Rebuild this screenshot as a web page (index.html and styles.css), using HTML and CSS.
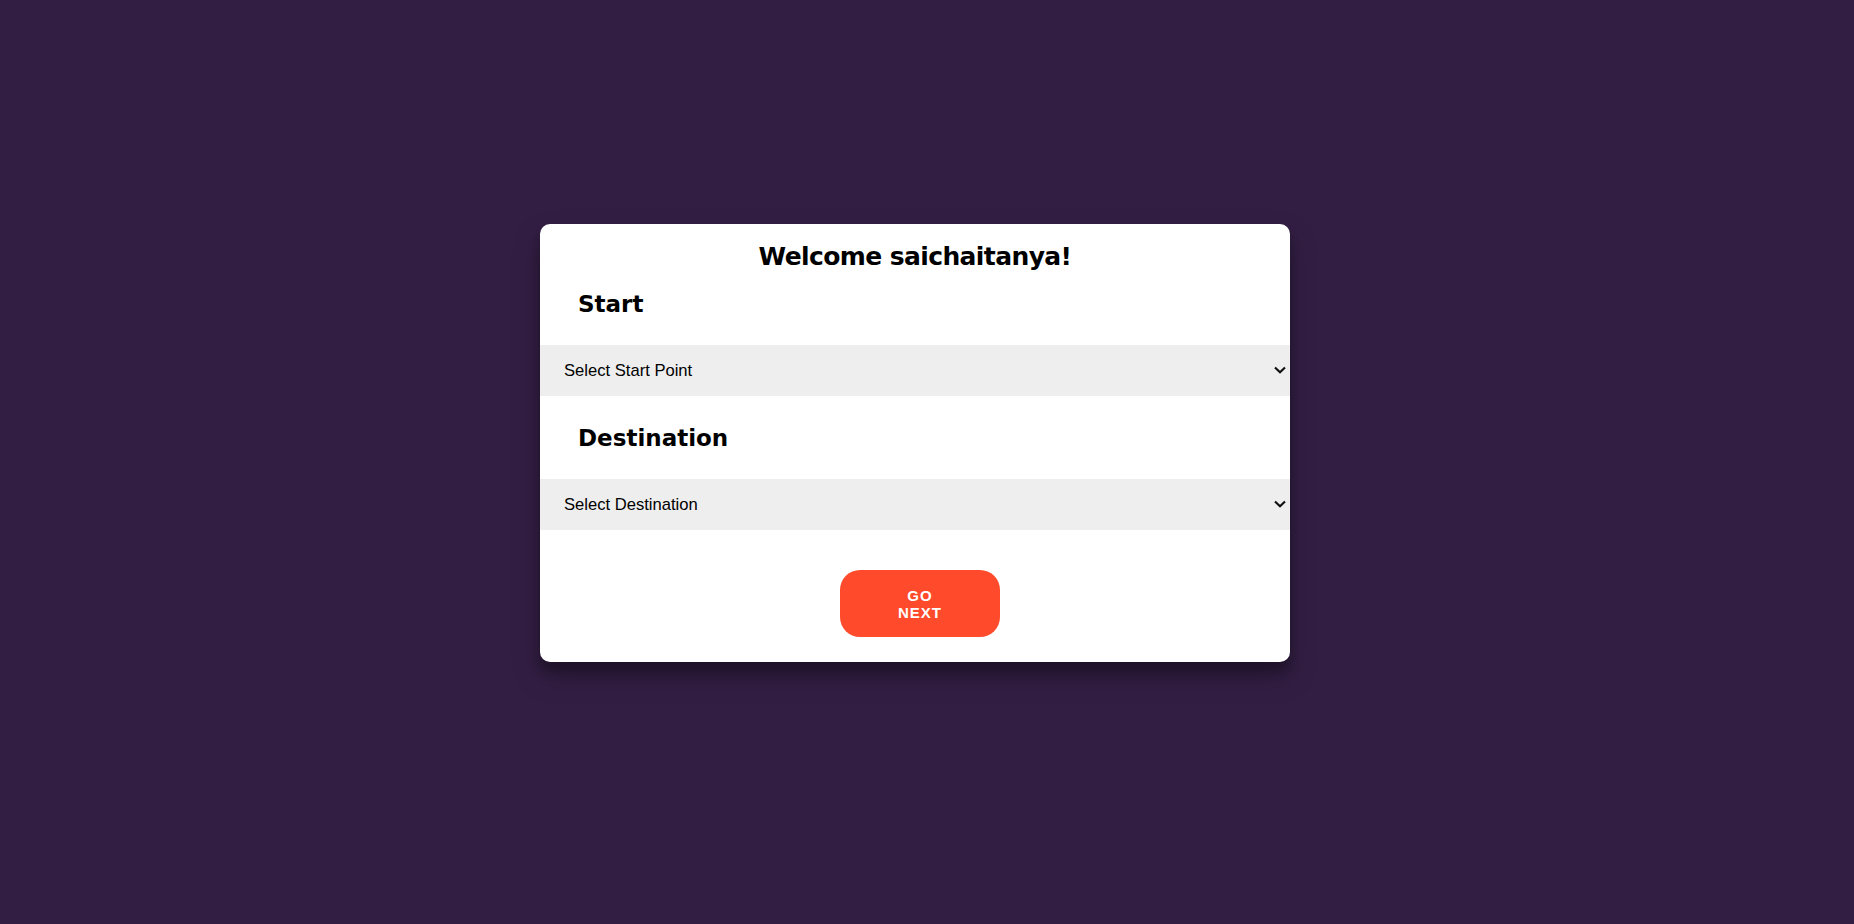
FILE: index.html
```html
<!DOCTYPE html>
<html lang="en">
<head>
<meta charset="utf-8">
<title>Welcome</title>
<link rel="stylesheet" href="styles.css">
</head>
<body>
<main class="page">
  <form class="card">
    <h1 class="title">Welcome saichaitanya!</h1>
    <h2 class="label">Start</h2>
    <div class="select-wrap">
      <select class="select">
        <option>Select Start Point</option>
      </select>
      <svg class="chev" width="12" height="8" viewBox="0 0 12 8"><path d="M1 1.5 L6 6.2 L11 1.5" fill="none" stroke="#111" stroke-width="2.2"/></svg>
    </div>
    <h2 class="label">Destination</h2>
    <div class="select-wrap">
      <select class="select">
        <option>Select Destination</option>
      </select>
      <svg class="chev" width="12" height="8" viewBox="0 0 12 8"><path d="M1 1.5 L6 6.2 L11 1.5" fill="none" stroke="#111" stroke-width="2.2"/></svg>
    </div>
    <div class="actions">
      <button type="button" class="btn">Go Next</button>
    </div>
  </form>
</main>
</body>
</html>
```
FILE: styles.css
```css
html, body {
  margin: 0;
  padding: 0;
}
body {
  background: #321e43;
  font-family: "Liberation Sans", Arial, sans-serif;
}
.page {
  height: 100vh;
  display: flex;
  align-items: center;
  justify-content: center;
}
.card {
  width: 750px;
  margin: 0 24px 38px 0;
  background: #fff;
  border-radius: 10px;
  box-shadow: 0 14px 28px rgba(0,0,0,0.25), 0 10px 10px rgba(0,0,0,0.22);
  display: flex;
  flex-direction: column;
  padding-bottom: 25px;
}
.title {
  margin: 17px 0 0;
  font-family: "DejaVu Sans", sans-serif;
  font-weight: bold;
  font-size: 25px;
  letter-spacing: -0.6px;
  line-height: 32px;
  text-align: center;
  color: #000;
}
.label {
  margin: 17px 0 0;
  padding-left: 38px;
  font-family: "DejaVu Sans", sans-serif;
  font-weight: bold;
  font-size: 23px;
  line-height: 28px;
  color: #000;
}
.label + .select-wrap {
  margin-top: 27px;
}
.select-wrap + .label {
  margin-top: 28px;
}
.select-wrap {
  position: relative;
  height: 51px;
}
.select {
  appearance: none;
  -webkit-appearance: none;
  width: 100%;
  height: 51px;
  border: none;
  border-radius: 0;
  background: #eeeeee;
  padding: 0 24px;
  margin: 0;
  font-family: "Liberation Sans", Arial, sans-serif;
  font-size: 16.6px;
  color: #000;
  outline: none;
}
.chev {
  position: absolute;
  right: 4px;
  top: 21px;
  pointer-events: none;
}
.actions {
  display: flex;
  justify-content: center;
  margin-top: 40px;
}
.btn {
  width: 160px;
  height: 67px;
  margin-left: 10px;
  padding: 0 45px;
  border: none;
  border-radius: 20px;
  background: #ff4b2b;
  color: #fff;
  font-family: "Liberation Sans", Arial, sans-serif;
  font-weight: bold;
  font-size: 15px;
  letter-spacing: 1px;
  text-transform: uppercase;
}
```
